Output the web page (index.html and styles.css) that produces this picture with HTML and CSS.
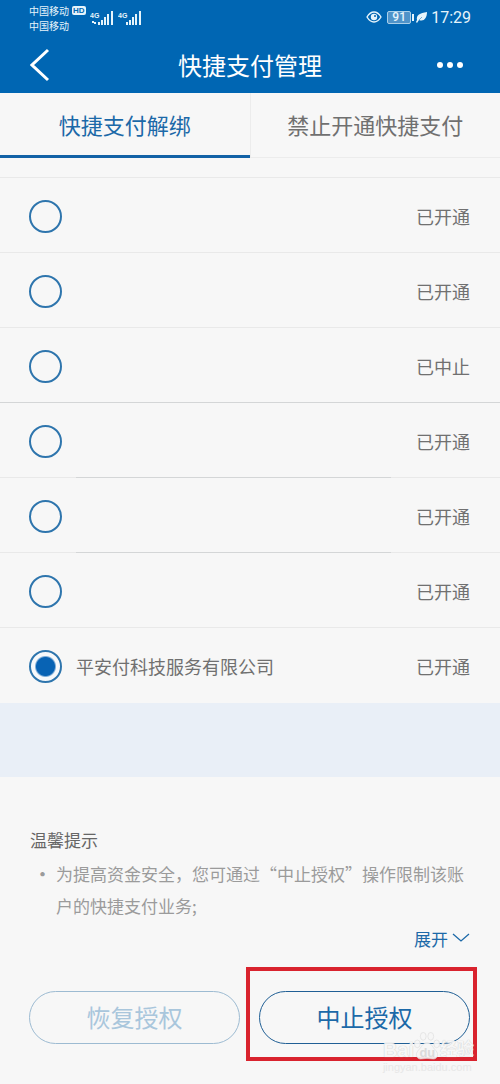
FILE: index.html
```html
<!DOCTYPE html>
<html lang="zh-CN">
<head>
    <meta charset="utf-8">
    <meta name="viewport" content="width=device-width, initial-scale=1">
    <title>快捷支付管理</title>
    <link rel="stylesheet" href="styles.css">
</head>
<body>
<header class="header">
    <div class="status-bar">
        <div class="carriers">
            <div class="carrier">中国移动 <span class="hd">HD</span></div>
            <div class="carrier">中国移动</div>
        </div>
        <svg class="signal" width="24" height="18" viewBox="0 0 24 18" fill="#e6f4fb">
            <text x="0" y="8" class="signal-text">4G</text>
            <path d="M2 11h2v2H2zM4 12h2v2H4zM8 12h2v3H8zM11 10h2v5h-2zM14 7h2v8h-2zM17 4h2v11h-2zM21 1h2v14h-2z"/>
        </svg>
        <svg class="signal" width="24" height="18" viewBox="0 0 24 18" fill="#e6f4fb">
            <text x="0" y="8" class="signal-text">4G</text>
            <path d="M8 12h2v3H8zM11 10h2v5h-2zM14 7h2v8h-2zM17 4h2v11h-2zM21 1h2v14h-2z"/>
        </svg>
        <div class="status-right">
            <svg width="16" height="12" viewBox="0 0 16 12" fill="none" stroke="#e6f4fb" stroke-width="1.4">
                <path d="M1 6Q4 1 8 1T15 6Q12 11 8 11T1 6Z"/>
                <circle cx="8" cy="6" r="3.2" fill="#e6f4fb" stroke="none"/>
                <circle cx="9" cy="5" r="1" fill="#0066b3" stroke="none"/>
            </svg>
            <span class="battery">91</span>
            <svg class="leaf" width="12" height="12" viewBox="0 0 12 12">
                <path d="M1 9C0 4 4 2 11 1C11 7 8 11 3 9L1 12L0 11Z" fill="#e6f4fb"/>
                <path d="M3 9L6 6" stroke="#0066b3" stroke-width="0.5"/>
            </svg>
            <span class="time">17:29</span>
        </div>
    </div>
    <div class="nav-bar">
        <button class="nav-button" aria-label="返回">
            <svg width="20" height="34" viewBox="0 0 20 34" fill="none" stroke="#fff" stroke-width="3">
                <path d="M18 2L2 17L18 32"/>
            </svg>
        </button>
        <h1 class="title">快捷支付管理</h1>
        <button class="nav-button more" aria-label="更多">
            <svg width="28" height="8" viewBox="0 0 28 8" fill="#fff">
                <circle cx="4" cy="4" r="3"/>
                <circle cx="14" cy="4" r="3"/>
                <circle cx="24" cy="4" r="3"/>
            </svg>
        </button>
    </div>
</header>

<nav class="tabs">
    <button class="tab active">快捷支付解绑</button>
    <button class="tab">禁止开通快捷支付</button>
</nav>

<main>
    <!-- 签约商户列表 -->
    <ul class="list">
        <li><label class="row"><input type="radio" name="merchant" class="radio"><span class="name"></span><span class="state">已开通</span></label></li>
        <li><label class="row"><input type="radio" name="merchant" class="radio"><span class="name"></span><span class="state">已开通</span></label></li>
        <li><label class="row"><input type="radio" name="merchant" class="radio"><span class="name"></span><span class="state">已中止</span></label></li>
        <li><label class="row dark"><input type="radio" name="merchant" class="radio"><span class="name"></span><span class="state">已开通</span></label></li>
        <li><label class="row partial"><input type="radio" name="merchant" class="radio"><span class="name"></span><span class="state">已开通</span></label></li>
        <li><label class="row partial"><input type="radio" name="merchant" class="radio"><span class="name"></span><span class="state">已开通</span></label></li>
        <li><label class="row"><input type="radio" name="merchant" class="radio" checked><span class="name">平安付科技服务有限公司</span><span class="state">已开通</span></label></li>
    </ul>
    <div class="band"></div>

    <section class="tips">
        <h2 class="tips-title">温馨提示</h2>
        <ul class="tips-list">
            <li>为提高资金安全，您可通过“中止授权”操作限制该账户的快捷支付业务;</li>
        </ul>
        <button class="expand">展开
            <svg width="18" height="10" viewBox="0 0 18 10" fill="none" stroke="#1c69a8" stroke-width="1.3">
                <path d="M1 1L9 8L17 1"/>
            </svg>
        </button>
    </section>

    <div class="actions">
        <button class="action disabled" disabled>恢复授权</button>
        <div class="marked">
            <button class="action">中止授权</button>
            <div class="watermark">
                <div class="wm-logo">
                    <span>Bai</span>
                    <svg width="26" height="28" viewBox="0 0 24 26" fill="#f6f6f6" stroke="#dcdcdc" stroke-width="0.6">
                        <ellipse cx="3" cy="11" rx="2.700" ry="3.600"/>
                        <ellipse cx="8.500" cy="4" rx="2.700" ry="3.600"/>
                        <ellipse cx="15.500" cy="4" rx="2.700" ry="3.600"/>
                        <ellipse cx="21" cy="11" rx="2.700" ry="3.600"/>
                        <path d="M12 10C8 10 7 14 4 17C0 21 3 26 7 25Q12 24 17 25C21 26 24 21 20 17C17 14 16 10 12 10Z"/>
                        <text x="5" y="23" class="wm-du">du</text>
                    </svg>
                    <span class="wm-cn">经验</span>
                </div>
                <div class="wm-url">jingyan.baidu.com</div>
            </div>
        </div>
    </div>
</main>
</body>
</html>
```
FILE: styles.css
```css
* {
    box-sizing: border-box;
}
body {
    margin: 0;
    background-color: #f7f7f7;
    color: #707070;
    font-family: "Noto Sans CJK SC", sans-serif;
    font-weight: 400;
}
button {
    padding: 0;
    border: none;
    background: none;
    font: inherit;
    color: inherit;
}
ul {
    margin: 0;
    padding: 0;
    list-style: none;
}

/* 顶部 */
.header {
    background-color: #0066b3;
    color: #fff;
}
.status-bar {
    display: flex;
    align-items: flex-start;
    height: 36px;
    padding: 3px 29px 0 29px;
    color: #e6f4fb;
}
.carrier {
    display: flex;
    align-items: center;
    gap: 3px;
    height: 15px;
    font-size: 10px;
}
.hd {
    padding: 0 1px;
    border-radius: 2px;
    background-color: #e6f4fb;
    color: #0066b3;
    font-family: "Liberation Sans", sans-serif;
    font-size: 8px;
    font-weight: 700;
    line-height: 9px;
}
.signal {
    margin: 7px 0 0 4px;
}
.signal-text {
    font-family: "Liberation Sans", sans-serif;
    font-size: 7px;
    font-weight: 700;
}
.status-right {
    display: flex;
    align-items: center;
    gap: 5px;
    height: 28px;
    margin-left: auto;
}
.battery {
    position: relative;
    width: 24px;
    border: 1px solid #a9cfe9;
    border-radius: 2px;
    background-color: #4f93c9;
    font-family: Roboto, sans-serif;
    font-size: 12px;
    font-weight: 500;
    line-height: 11px;
    text-align: center;
}
.battery::after {
    content: "";
    position: absolute;
    top: 2px;
    right: -4px;
    width: 2px;
    height: 7px;
    background-color: #e6f4fb;
}
.leaf {
    margin-right: -2px;
}
.time {
    font-family: Roboto, sans-serif;
    font-size: 16px;
}
.nav-bar {
    display: flex;
    align-items: center;
    justify-content: space-between;
    height: 57px;
    padding: 0 36px 0 30px;
}
.nav-button {
    display: flex;
    align-items: center;
    width: 36px;
    height: 40px;
}
.more {
    justify-content: flex-end;
    width: 30px;
}
.title {
    margin: 0;
    font-size: 24px;
    font-weight: 400;
}

/* 标签页 */
.tabs {
    display: flex;
    height: 65px;
}
.tab {
    flex: 1;
    padding-bottom: 2px;
    border-left: 1px solid #ececec;
    border-bottom: 1px solid #ececec;
    font-size: 22px;
}
.tab.active {
    padding-bottom: 0;
    border-left: none;
    border-bottom: 3px solid #1262a6;
    color: #1c69a8;
}

/* 列表 */
.list {
    margin-top: 19px;
}
.row {
    display: grid;
    grid-template-columns: 33px 1fr 79px;
    height: 75px;
    padding: 0 30px 0 29px;
    border-top: 1px solid #e9e9e9;
    font-size: 18px;
    line-height: 76px;
}
.row.dark {
    border-top-color: #d4d6d7;
}
.row.partial .name {
    margin-top: -1px;
    border-top: 1px solid #d4d6d7;
}
.radio {
    appearance: none;
    align-self: center;
    width: 33px;
    height: 33px;
    margin: 0;
    border: 2px solid #2e75ad;
    border-radius: 50%;
}
.radio:checked {
    background: radial-gradient(circle, #0863b4 9px, #f7f9fb 11px);
}
.name {
    margin-left: 14px;
}
.state {
    text-align: right;
}
.band {
    height: 74px;
    margin-top: 1px;
    background-color: #e9eff7;
}

/* 温馨提示 */
.tips {
    display: flex;
    flex-direction: column;
    padding: 49px 30px 0;
    font-size: 17px;
}
.tips-title {
    margin: 0;
    font-size: 17px;
    font-weight: 400;
    line-height: 28px;
    color: #666;
}
.tips-list {
    margin-top: 4px;
    padding-left: 26px;
    line-height: 32px;
    color: #9b9b9b;
}
.tips-list li::before {
    content: "·";
    float: left;
    width: 17px;
    margin-left: -22px;
    font-weight: 700;
    text-align: center;
}
.expand {
    display: flex;
    align-items: center;
    align-self: flex-end;
    gap: 4px;
    height: 32px;
    color: #1c69a8;
}

/* 底部按钮 */
.actions {
    display: grid;
    grid-template-columns: 1fr 1fr;
    gap: 19px;
    padding: 37px 30px 40px 29px;
}
.action {
    width: 100%;
    height: 53px;
    padding-bottom: 2px;
    border: 1px solid #205f95;
    border-radius: 27px;
    color: #1c69a8;
    font-size: 24px;
}
.action.disabled {
    border-color: #9dbbd2;
    color: #a9c6dc;
}
.marked {
    position: relative;
}
.marked::after {
    content: "";
    position: absolute;
    inset: -24px -7px -17px -13px;
    border: 4px solid #d9232e;
    pointer-events: none;
}

/* 水印 */
.watermark {
    position: absolute;
    z-index: 1;
    right: -4px;
    bottom: -30px;
    opacity: 0.9;
    color: #f6f6f6;
    font-family: "Liberation Sans", "Noto Sans CJK SC", sans-serif;
    text-shadow: 0 0 1px #bbb;
    pointer-events: none;
}
.wm-logo {
    display: flex;
    align-items: flex-end;
    font-size: 20px;
    font-weight: 700;
    line-height: 20px;
}
.wm-cn {
    font-size: 17px;
}
.wm-du {
    fill: #d8d8d8;
    stroke: none;
    font-size: 12px;
    text-shadow: none;
}
.wm-url {
    color: #e6e6e6;
    font-size: 11px;
    line-height: 14px;
    text-shadow: none;
}
```
